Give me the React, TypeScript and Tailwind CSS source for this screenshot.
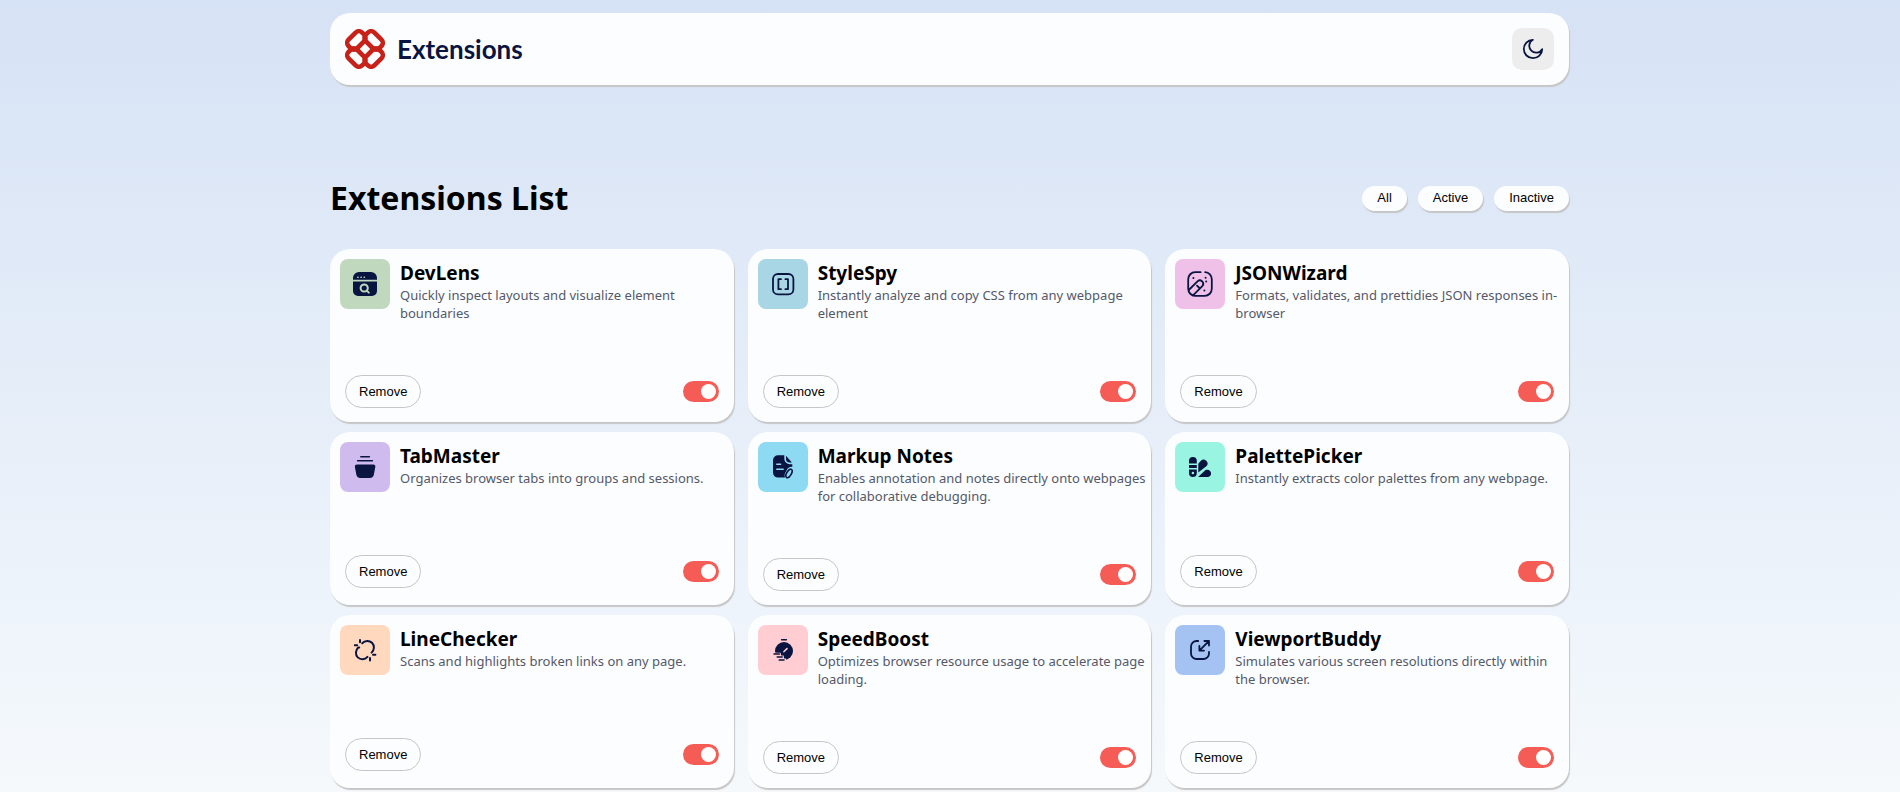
import { useState } from "react";
import type { ReactNode } from "react";

const NAVY = "#091540";

type Extension = {
  name: string;
  description: string;
  tile: string;
  icon: ReactNode;
};

const stroke = {
  fill: "none",
  stroke: NAVY,
  strokeWidth: 1.8,
  strokeLinecap: "round" as const,
  strokeLinejoin: "round" as const,
};

const EXTENSIONS: Extension[] = [
  {
    name: "DevLens",
    description: "Quickly inspect layouts and visualize element boundaries",
    tile: "#c0d8bd",
    icon: (
      <>
        <path fill={NAVY} d="M13 20.8V19a6 6 0 0 1 6-6h12a6 6 0 0 1 6 6v1.8ZM13 22.4h24V32a5 5 0 0 1-5 5H18a5 5 0 0 1-5-5Z" />
        <path stroke="#c0d8bd" strokeWidth="1.6" strokeLinecap="round" d="M17.8 18.2h.2M21 18.2h.2M24.2 18.2h.2" />
        <circle cx="24.2" cy="29" r="3.6" fill="none" stroke="#c0d8bd" strokeWidth="2" />
        <path stroke="#c0d8bd" strokeWidth="2" strokeLinecap="round" d="m26.8 31.6 2 2" />
      </>
    ),
  },
  {
    name: "StyleSpy",
    description: "Instantly analyze and copy CSS from any webpage element",
    tile: "#a9d6e5",
    icon: (
      <g {...stroke}>
        <rect x="15" y="15" width="20.4" height="20.4" rx="5" />
        <path d="M23 20.2h-2.6v10H23M27.4 20.2H30v10h-2.6" />
      </g>
    ),
  },
  {
    name: "JSONWizard",
    description: "Formats, validates, and prettidies JSON responses in-browser",
    tile: "#f0c1e8",
    icon: (
      <g {...stroke}>
        <path d="M25.6 13.2h-5.4a7 7 0 0 0-7 7v9.6a7 7 0 0 0 7 7h9.6a7 7 0 0 0 7-7v-9.6a7 7 0 0 0-6.6-7" />
        <path d="m13.8 31 8.7-8.7a3.4 3.4 0 0 1 4.8 4.8l-9.3 9.3M22 26.6l2.4 2.4" />
        <path strokeWidth="2" d="M18.4 19h.01M30.6 18.8h.01M31.2 22.4h.01M29.4 31.4h.01" />
      </g>
    ),
  },
  {
    name: "TabMaster",
    description: "Organizes browser tabs into groups and sessions.",
    tile: "#cfbbee",
    icon: (
      <>
        <path {...stroke} strokeWidth={1.5} d="M20.8 14.8h8.6M17.6 18.8h14.8" />
        <path fill={NAVY} d="M17.2 22.4h15.8a2.3 2.3 0 0 1 2.3 2.7l-1.4 7.4a4.2 4.2 0 0 1-4.1 3.5h-9.4a4.2 4.2 0 0 1-4.1-3.5l-1.4-7.4a2.3 2.3 0 0 1 2.3-2.7Z" />
      </>
    ),
  },
  {
    name: "Markup Notes",
    description: "Enables annotation and notes directly onto webpages for collaborative debugging.",
    tile: "#8fdaf3",
    icon: (
      <>
        <path fill={NAVY} d="M20 13.2h6.3v3.6a5.4 5.4 0 0 0 5.4 5.4h2.6v2.6c-2.2-.4-4 .6-5.1 2.4l-1.8 3.2c-.9 1.6-1 3.4-.4 5.2H20a5 5 0 0 1-5-5V18.2a5 5 0 0 1 5-5Z" />
        <path fill={NAVY} d="M28 13.8v3a3.8 3.8 0 0 0 3.8 3.8h2.1Z" />
        <path stroke="#8fdaf3" strokeWidth="1.5" strokeLinecap="round" d="M18.8 22.2h3.8M18.8 27.2h6.4" />
        <ellipse {...stroke} strokeWidth={1.6} cx="31" cy="31.4" rx="2.3" ry="4.7" transform="rotate(30 31 31.4)" />
      </>
    ),
  },
  {
    name: "PalettePicker",
    description: "Instantly extracts color palettes from any webpage.",
    tile: "#99f5e1",
    icon: (
      <>
        <path fill={NAVY} d="M14 21.6v-2.8a3.9 3.9 0 0 1 7.8 0v2.8ZM14 23.1h7.8v3H14ZM14 27.6h7.8v3.5a3.9 3.9 0 0 1-7.8 0Z" />
        <circle cx="17.9" cy="31" r="1.3" fill="#99f5e1" />
        <path fill={NAVY} d="M23.3 30.4v-8.7l2.6-2.9a3.9 3.9 0 0 1 5.7 5.3ZM23.1 35l7.4-6.9c3.1-1.3 5.6.9 5.6 3.4 0 2.1-1.6 3.5-3.7 3.5Z" />
      </>
    ),
  },
  {
    name: "LineChecker",
    description: "Scans and highlights broken links on any page.",
    tile: "#ffd8be",
    icon: (
      <g {...stroke} strokeWidth={2}>
        <path d="M22.2 18.2C25 15.2 29.4 15.2 32 17.8c2.7 2.8 2.5 7-.4 9.8" />
        <path d="M19.2 22.5h-1c-2.9 2.9-3 7.2-.4 9.9 2.7 2.6 7 2.5 9.7-.5" />
        <path d="M20 14.9v2.4M14.8 20.3h2.4M30 33v2.4M33 29.8h2.4" />
      </g>
    ),
  },
  {
    name: "SpeedBoost",
    description: "Optimizes browser resource usage to accelerate page loading.",
    tile: "#ffcdd2",
    icon: (
      <>
        <path {...stroke} strokeWidth={1.5} d="M23.6 14.8h4.8" />
        <circle cx="26" cy="26" r="9" fill={NAVY} />
        <path fill="#ffcdd2" d="M15 27.8h7.6l.6 2.6h2.4l.6 3h1.8v3H17Z" />
        <path stroke="#ffcdd2" strokeWidth="1.5" strokeLinecap="round" d="m25.8 26.8 3.2-3.2" />
        <path {...stroke} strokeWidth={1.5} d="M16 29h5.4M19.2 32h5M21.2 35h4.8" />
      </>
    ),
  },
  {
    name: "ViewportBuddy",
    description: "Simulates various screen resolutions directly within the browser.",
    tile: "#a4c3f2",
    icon: (
      <g {...stroke}>
        <path d="M23.2 16h-1.6a5.6 5.6 0 0 0-5.6 5.6v6.8a5.6 5.6 0 0 0 5.6 5.6h6.8a5.6 5.6 0 0 0 5.6-5.6v-1.6" />
        <path d="m24.6 25.4 9.4-9.4M29.4 16H34v4.6M24.4 21v4.6H29" />
      </g>
    ),
  },
];

function Logo() {
  return (
    <svg viewBox="0 0 40 40" className="size-10 shrink-0" aria-hidden="true">
      {[0, 90, 180, 270].map((angle) => (
        <rect
          key={angle}
          x="-9.6"
          y="-6.1"
          width="19.2"
          height="12.2"
          rx="4.6"
          fill="none"
          stroke="#c7221a"
          strokeWidth="4.6"
          transform={`rotate(${angle} 20 20) translate(11.4 11.4) rotate(-45)`}
        />
      ))}
    </svg>
  );
}

function Card({ name, description, tile, icon }: Extension) {
  const [active, setActive] = useState(true);
  return (
    <article className="rounded-[20px] bg-[#fcfdff] pt-[10px] pb-[14px] shadow-[1px_2px_1px_#c6c6c6]">
      <div className="flex min-h-[60px] items-start gap-[10px] pr-1 pl-[10px]">
        <svg viewBox="0 0 50 50" className="size-[50px] shrink-0 rounded-lg" style={{ backgroundColor: tile }} aria-hidden="true">
          {icon}
        </svg>
        <div className="pt-px">
          <h2 className="text-[19px] leading-[26px] font-bold text-black">{name}</h2>
          <p className="text-[13px] leading-[18px] text-[#545969]">{description}</p>
        </div>
      </div>
      <div className="mt-[53px] flex items-center justify-between px-[15px]">
        <button
          type="button"
          className="h-[33px] rounded-full border border-[#c6c6c6] px-[13px] font-['Liberation_Sans',Arial,sans-serif] text-[13px] text-black"
        >
          Remove
        </button>
        <input
          type="checkbox"
          role="switch"
          aria-label={`Enable ${name}`}
          checked={active}
          onChange={() => setActive(!active)}
          className="flex h-[21px] w-9 cursor-pointer appearance-none items-center rounded-full bg-[#c6c6c6] p-[3px] before:size-[15px] before:rounded-full before:bg-white checked:justify-end checked:bg-[#f55c55]"
        />
      </div>
    </article>
  );
}

export default function App() {
  return (
    <div className="min-h-screen bg-linear-to-b from-[#d6e2f5] to-[#f5f9fc] pt-[13px] pr-[17px] pb-1 pl-4 font-['Noto_Sans',sans-serif]">
      <div className="mx-auto max-w-[1239px]">
        <header className="flex items-center justify-between rounded-[20px] bg-[#fcfdff] p-[15px] shadow-[1px_2px_1px_#c6c6c6]">
          <div className="flex items-center gap-3">
            <Logo />
            <span className="font-[Lato,sans-serif] text-[26px] leading-[30px] font-bold text-[#091540]">Extensions</span>
          </div>
          <button type="button" aria-label="Switch to dark theme" className="grid size-[42px] place-items-center rounded-[10px] bg-[#ededed]">
            <svg viewBox="0 0 22 22" className="size-[22px]" aria-hidden="true">
              <path {...stroke} d="M10.8 1.8A9.2 9.2 0 1 0 20.2 11.2 6.9 6.9 0 1 1 10.8 1.8Z" />
            </svg>
          </button>
        </header>
        <main>
          <div className="mt-[91px] mb-[29px] flex flex-wrap items-center justify-between gap-x-4">
            <h1 className="text-[32px] leading-[44px] font-bold text-black">Extensions List</h1>
            <div className="flex gap-[11px]">
              {["All", "Active", "Inactive"].map((label) => (
                <button
                  key={label}
                  type="button"
                  className="h-[25px] rounded-full bg-[#fcfdff] px-[15px] font-['Liberation_Sans',Arial,sans-serif] text-[13px] text-black shadow-[1px_2px_1px_#c6c6c6]"
                >
                  {label}
                </button>
              ))}
            </div>
          </div>
          <div className="grid grid-cols-1 gap-x-[14px] gap-y-[10px] md:grid-cols-2 lg:grid-cols-3">
            {EXTENSIONS.map((extension) => (
              <Card key={extension.name} {...extension} />
            ))}
          </div>
        </main>
      </div>
    </div>
  );
}
